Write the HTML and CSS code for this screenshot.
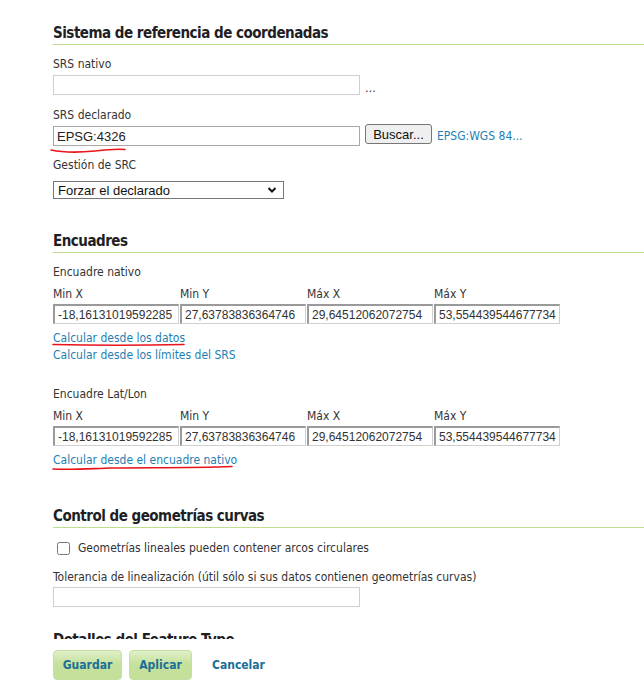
FILE: index.html
```html
<!DOCTYPE html>
<html lang="es">
<head>
<meta charset="utf-8">
<title>SRS</title>
<link rel="stylesheet" href="styles.css">
</head>
<body>
<div class="page">
  <h3 class="sect first">Sistema de referencia de coordenadas</h3>
  <div class="lbl gap11">SRS nativo</div>
  <div class="row">
    <input class="txt wide" type="text" value="">
    <span class="dots">…</span>
  </div>
  <div class="lbl gap11">SRS declarado</div>
  <div class="row r3">
    <span class="mark">
      <input class="txt wide dark" type="text" value="EPSG:4326">
      <svg class="scribble s1" width="80" height="8" viewBox="0 0 80 8"><path d="M1 3 C 15 6, 30 5.5, 45 4 C 58 2.5, 68 2, 75 2.5" fill="none" stroke="#e8141a" stroke-width="1.6" stroke-linecap="round"/></svg>
    </span>
    <button class="btn" type="button">Buscar...</button>
    <a class="link epsg" href="#">EPSG:WGS 84...</a>
  </div>
  <div class="lbl gap11">Gestión de SRC</div>
  <div class="selwrap">
    <select class="sel"><option>Forzar el declarado</option></select>
    <svg class="chev" width="10" height="8" viewBox="0 0 10 8"><path d="M1.5 2 L5 5.5 L8.5 2" fill="none" stroke="#111" stroke-width="2"/></svg>
  </div>

  <h3 class="sect enc">Encuadres</h3>
  <div class="lbl gap11">Encuadre nativo</div>
  <div class="bbox">
    <div class="col"><span class="lbl">Min X</span><input class="txt bb" type="text" value="-18,16131019592285"></div>
    <div class="col"><span class="lbl">Min Y</span><input class="txt bb" type="text" value="27,63783836364746"></div>
    <div class="col"><span class="lbl">Máx X</span><input class="txt bb" type="text" value="29,64512062072754"></div>
    <div class="col"><span class="lbl">Máx Y</span><input class="txt bb" type="text" value="53,554439544677734"></div>
  </div>
  <div class="links">
    <span class="mark"><a class="link" href="#">Calcular desde los datos</a>
      <svg class="scribble s2" width="134" height="6" viewBox="0 0 134 6"><path d="M1 2.5 C 40 3.5, 90 3.5, 132 2.5" fill="none" stroke="#e8141a" stroke-width="1.6" stroke-linecap="round"/></svg>
    </span>
    <a class="link" href="#">Calcular desde los límites del SRS</a>
  </div>

  <div class="lbl latlon">Encuadre Lat/Lon</div>
  <div class="bbox">
    <div class="col"><span class="lbl">Min X</span><input class="txt bb" type="text" value="-18,16131019592285"></div>
    <div class="col"><span class="lbl">Min Y</span><input class="txt bb" type="text" value="27,63783836364746"></div>
    <div class="col"><span class="lbl">Máx X</span><input class="txt bb" type="text" value="29,64512062072754"></div>
    <div class="col"><span class="lbl">Máx Y</span><input class="txt bb" type="text" value="53,554439544677734"></div>
  </div>
  <div class="links">
    <span class="mark"><a class="link" href="#">Calcular desde el encuadre nativo</a>
      <svg class="scribble s3" width="182" height="8" viewBox="0 0 182 8"><path d="M1 5 C 20 6, 40 4.5, 60 4 C 100 3.5, 140 4, 180 2.5" fill="none" stroke="#e8141a" stroke-width="1.6" stroke-linecap="round"/></svg>
    </span>
  </div>

  <h3 class="sect curv">Control de geometrías curvas</h3>
  <label class="chk"><input type="checkbox"><span>Geometrías lineales pueden contener arcos circulares</span></label>
  <div class="lbl tol">Tolerancia de linealización (útil sólo si sus datos contienen geometrías curvas)</div>
  <div class="row">
    <input class="txt wide" type="text" value="">
  </div>
  <h3 class="sect det">Detalles del Feature Type</h3>
  <div class="spacer"></div>
</div>
<div class="bar">
  <button class="gbtn g1" type="button">Guardar</button>
  <button class="gbtn g2" type="button">Aplicar</button>
  <a class="cancel" href="#">Cancelar</a>
</div>
</body>
</html>
```
FILE: styles.css
```css
* { box-sizing: border-box; }
html, body { margin: 0; padding: 0; background: #fff; }
body {
  font-family: "DejaVu Sans Condensed", "DejaVu Sans", sans-serif;
  font-size: 12px;
  color: #333;
  overflow: hidden;
  height: 686px;
}
.page {
  padding-left: 53px;
  padding-top: 24px;
}
.sect {
  margin: 0;
  font-size: 15px;
  font-weight: bold;
  letter-spacing: -0.5px;
  line-height: 18px;
  color: #1e1e24;
  padding-bottom: 2px;
  border-bottom: 1px solid #bfdf8f;
}
.sect.enc { margin-top: 33px; }
.sect.curv { margin-top: 38px; }
.sect.det { margin-top: 24px; }
.lbl {
  display: block;
  line-height: 16px;
  color: #333;
}
.gap11 { margin-top: 11px; }
.row {
  display: flex;
  align-items: center;
  margin-top: 2px;
}
.row.r3 { margin-top: 3px; }
.txt {
  font-family: "Liberation Sans", Arial, sans-serif;
  font-size: 12px;
  color: #333;
  height: 20px;
  padding: 1px 3px;
  border: 1px solid #cfcfcf;
  background: #fff;
  outline: none;
  margin: 0;
}
.wide { width: 307px; }
.dark { border-color: #a8a8a8; font-size: 13px; color: #222; }
.dots { margin-left: 5px; color: #333; font-size: 12px; line-height: 16px; padding-top: 6px; }
.mark { position: relative; display: inline-block; }
.scribble { position: absolute; pointer-events: none; }
.s1 { left: -3px; top: 21px; }
.s2 { left: -1px; top: 12px; }
.s3 { left: -1px; top: 12px; }
.btn {
  font-family: "Liberation Sans", Arial, sans-serif;
  font-size: 13px;
  color: #111;
  height: 20px;
  width: 67px;
  padding: 0;
  margin: 0 0 0 5px;
  border: 1px solid #767676;
  border-radius: 3px;
  background: #efefef;
  align-self: flex-start;
  margin-top: -2px;
}
.link {
  color: #1f7fb3;
  text-decoration: none;
  line-height: 17px;
}
.epsg { margin-left: 5px; }
.selwrap {
  position: relative;
  width: 231px;
  height: 18px;
  margin-top: 8px;
}
.sel {
  appearance: none;
  -webkit-appearance: none;
  width: 231px;
  height: 18px;
  margin: 0;
  padding: 0 0 0 4px;
  border: 1px solid #767676;
  border-radius: 0;
  background: #fff;
  font-family: "Liberation Sans", Arial, sans-serif;
  font-size: 13px;
  color: #111;
  outline: none;
}
.chev { position: absolute; right: 7px; top: 5px; pointer-events: none; }
.bbox {
  display: grid;
  grid-template-columns: repeat(4, 127px);
  margin-top: 6px;
}
.col { display: flex; flex-direction: column; }
.col .lbl { margin-bottom: 2px; }
.bb {
  width: 126px;
  border-width: 2px 1px 1px 2px;
  border-style: solid;
  border-color: #9a9a9a #d0d0d0 #d0d0d0 #9a9a9a;
  padding: 0 2px 0 3px;
}
.links {
  display: flex;
  flex-direction: column;
  align-items: flex-start;
  margin-top: 6px;
}
.links .link { display: block; }
.latlon { margin-top: 22px; }
.chk {
  display: flex;
  align-items: center;
  margin-top: 12px;
  line-height: 16px;
}
.chk input {
  width: 13px;
  height: 13px;
  margin: 0 8px 0 4px;
}
.tol { margin-top: 13px; }
.spacer { height: 40px; }
.bar {
  position: fixed;
  left: 0;
  right: 0;
  bottom: 0;
  height: 47px;
  background: #fff;
  display: flex;
  align-items: flex-start;
  padding-left: 53px;
  padding-top: 11px;
}
.gbtn {
  font-family: "DejaVu Sans Condensed", "DejaVu Sans", sans-serif;
  font-weight: bold;
  font-size: 12px;
  color: #1b6f97;
  height: 30px;
  padding: 0;
  margin: 0 7px 0 0;
  border: 1px solid #c4e0a0;
  border-radius: 4px;
  background: linear-gradient(#dff0c8, #c6e19e 45%, #c3df98);
}
.g1 { width: 69px; }
.g2 { width: 63px; }
.cancel {
  margin-left: 13px;
  line-height: 30px;
  font-weight: bold;
  color: #1b6f97;
  text-decoration: none;
}
```
